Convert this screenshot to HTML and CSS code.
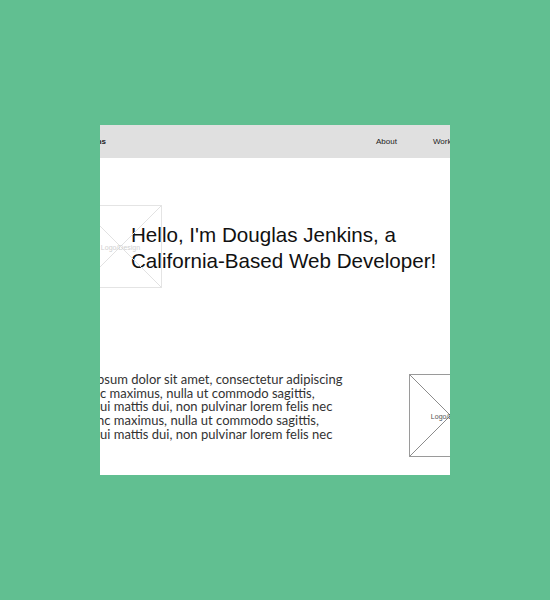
FILE: index.html
```html
<!DOCTYPE html>
<html lang="en">
<head>
<meta charset="utf-8">
<title>Douglas Jenkins</title>
<link rel="stylesheet" href="styles.css">
</head>
<body>
<div class="viewport">
  <div class="page">
    <header class="topbar">
      <span class="brand">Douglas Jenkins</span>
      <nav class="nav">
        <a href="#about">About</a>
        <a href="#work">Work</a>
        <a href="#contact">Contact</a>
      </nav>
    </header>

    <section class="hero">
      <div class="ph ph-light">
        <svg viewBox="0 0 100 100" preserveAspectRatio="none"><line x1="0" y1="0" x2="100" y2="100"/><line x1="100" y1="0" x2="0" y2="100"/></svg>
        <span class="ph-label">Logo/Design</span>
      </div>
      <h1 class="headline">Hello, I'm Douglas Jenkins, a<br>California-Based Web Developer!</h1>
    </section>

    <section class="about" id="about">
      <div class="text">
        <div class="line"><span class="pre s">Lorem i</span>psum dolor sit amet, consectetur adipiscing</div>
        <div class="line"><span class="pre">elit. Nun</span>c maximus, nulla ut commodo sagittis,</div>
        <div class="line"><span class="pre">sapien q</span>ui mattis dui, non pulvinar lorem felis nec</div>
        <div class="line"><span class="pre s">Nu</span>nc maximus, nulla ut commodo sagittis,</div>
        <div class="line"><span class="pre">sapien q</span>ui mattis dui, non pulvinar lorem felis nec</div>
      </div>
      <div class="ph ph-dark">
        <svg viewBox="0 0 100 100" preserveAspectRatio="none"><line x1="0" y1="0" x2="100" y2="100"/><line x1="100" y1="0" x2="0" y2="100"/></svg>
        <span class="ph-label">Logo/Design</span>
      </div>
    </section>
  </div>
</div>
</body>
</html>
```

FILE: styles.css
```css
html, body {
  margin: 0;
  padding: 0;
}

body {
  background: #61bf91;
  width: 550px;
  height: 600px;
  overflow: hidden;
}

.viewport {
  width: 350px;
  height: 350px;
  margin: 125px 0 0 100px;
  background: #ffffff;
  overflow: hidden;
}

.page {
  width: 530px;
  margin-left: -80px;
}

.topbar {
  height: 33px;
  background: #e0e0e0;
  display: flex;
  align-items: center;
  font-family: "Liberation Sans", sans-serif;
  font-size: 8px;
  color: #222;
}

.brand {
  flex: 0 0 86px;
  text-align: right;
  white-space: nowrap;
  font-weight: bold;
}

.nav {
  display: flex;
  gap: 36px;
  margin-left: 270px;
  white-space: nowrap;
}

.nav a {
  color: #222;
  text-decoration: none;
}

.hero {
  display: grid;
  margin-top: 47px;
  padding-left: 59px;
}

.hero > * {
  grid-area: 1 / 1;
}

.ph {
  position: relative;
  width: 83px;
  height: 83px;
  box-sizing: border-box;
  font-family: "Liberation Sans", sans-serif;
}

.ph svg {
  display: block;
  width: 100%;
  height: 100%;
}

.ph line {
  vector-effect: non-scaling-stroke;
  stroke-width: 1;
}

.ph-label {
  position: absolute;
  left: 0;
  right: 0;
  top: 50%;
  transform: translateY(-50%);
  text-align: center;
  font-size: 7px;
  white-space: nowrap;
}

.ph-light {
  border: 1px solid #e4e4e4;
}

.ph-light line {
  stroke: #e2e2e2;
}

.ph-light .ph-label {
  color: #d0d0d0;
}

.ph-dark {
  border: 1px solid #9a9a9a;
  margin-left: 49px;
  margin-top: 1px;
}

.ph-dark line {
  stroke: #8c8c8c;
}

.ph-dark .ph-label {
  color: #555;
}

.headline {
  margin: 17px 0 0 52px;
  font-family: "Liberation Sans", sans-serif;
  font-weight: normal;
  font-size: 20.6px;
  line-height: 26px;
  color: #111;
  white-space: nowrap;
}

.about {
  display: flex;
  align-items: flex-start;
  margin-top: 85px;
}

.text {
  flex: 0 0 340px;
  font-family: Lato, "Liberation Sans", sans-serif;
  font-size: 13px;
  line-height: 13.7px;
  color: #333;
}

.line {
  display: flex;
  white-space: nowrap;
}

.pre {
  flex: 0 0 80px;
  display: flex;
  justify-content: flex-end;
}

.pre.s {
  flex-basis: 77px;
}
```
